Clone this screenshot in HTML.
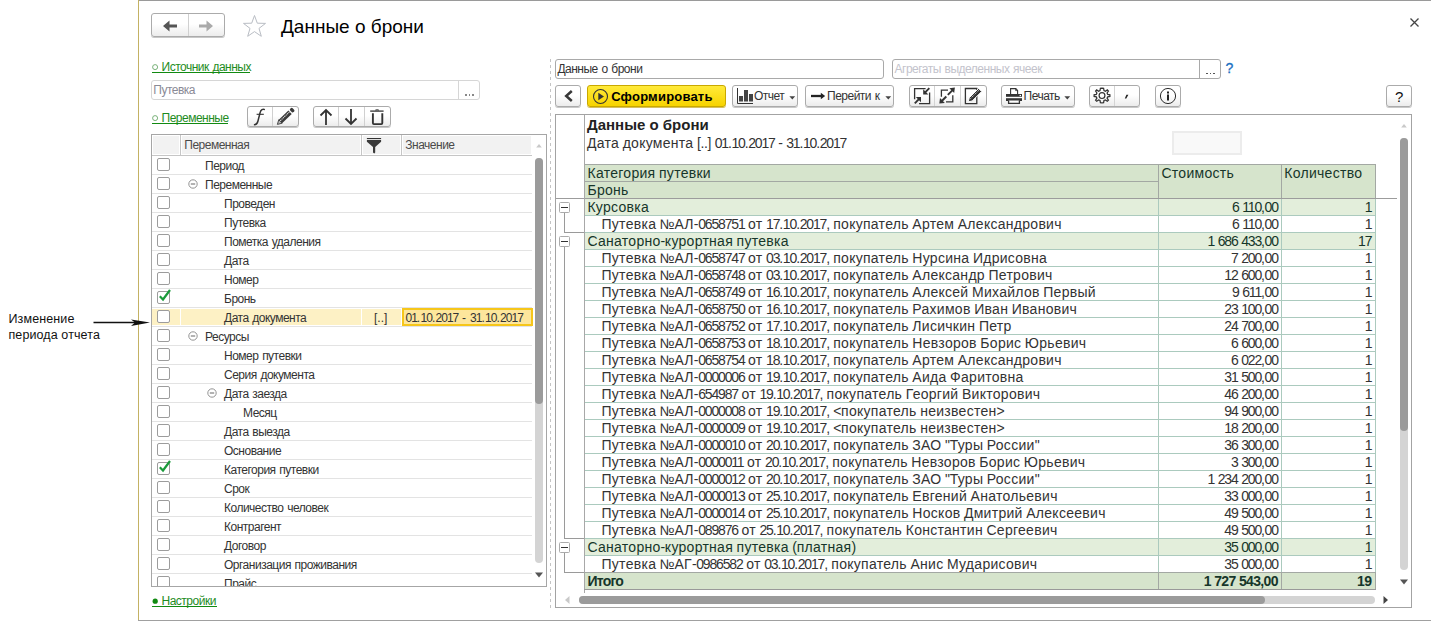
<!DOCTYPE html><html><head><meta charset="utf-8"><style>
html,body{margin:0;padding:0;}
body{width:1431px;height:621px;position:relative;overflow:hidden;background:#fff;font-family:"Liberation Sans",sans-serif;}
.t{position:absolute;white-space:pre;font-family:"Liberation Sans",sans-serif;}
.btn{position:absolute;box-sizing:border-box;border:1px solid #ababab;border-radius:3px;background:linear-gradient(#ffffff 0%,#ffffff 45%,#ececec 100%);box-shadow:0 1px 0 #c8c8c8;}
</style></head><body>
<div style="position:absolute;left:138px;top:0px;width:1293px;height:1px;background:#9a9a9a"></div>
<div style="position:absolute;left:138px;top:0px;width:1px;height:621px;background:#c4b264"></div>
<div style="position:absolute;left:138px;top:620px;width:1293px;height:1px;background:#a0a0a0"></div>
<div class="t" style="left:8.5px;top:313px;font-size:12.5px;line-height:12.5px;font-weight:400;color:#111;letter-spacing:0.12px">Изменение</div>
<div class="t" style="left:8.5px;top:329px;font-size:12.5px;line-height:12.5px;font-weight:400;color:#111;letter-spacing:0.1px">периода отчета</div>
<svg style="position:absolute;left:90px;top:316px" width="64" height="14"><line x1="3.5" y1="6.5" x2="50" y2="6.5" stroke="#111" stroke-width="1.3"/><path d="M41 3.5 L60 6.5 L41 10 L45 6.5 Z" fill="#111"/></svg>
<div class="btn" style="left:151px;top:13px;width:74px;height:24px"></div>
<div style="position:absolute;left:188px;top:14px;width:1px;height:22px;background:#d0d0d0"></div>
<svg style="position:absolute;left:160px;top:18px" width="20" height="16"><path d="M3 8 L9.5 2.5 L9.5 6.5 L17 6.5 L17 9.5 L9.5 9.5 L9.5 13.5 Z" fill="#555"/></svg>
<svg style="position:absolute;left:196px;top:18px" width="20" height="16"><path d="M17 8 L10.5 2.5 L10.5 6.5 L3 6.5 L3 9.5 L10.5 9.5 L10.5 13.5 Z" fill="#aaa"/></svg>
<svg style="position:absolute;left:242px;top:14px" width="25" height="24"><path d="M12.5 1.5 L15.3 9.2 L23.5 9.4 L17 14.4 L19.3 22.3 L12.5 17.6 L5.7 22.3 L8 14.4 L1.5 9.4 L9.7 9.2 Z" fill="none" stroke="#b9bdc4" stroke-width="1"/></svg>
<div class="t" style="left:281px;top:17px;font-size:19px;line-height:19px;font-weight:400;color:#000;letter-spacing:0px">Данные о брони</div>
<svg style="position:absolute;left:1408px;top:16px" width="13" height="13"><path d="M2.5 2.5 L10.5 10.5 M10.5 2.5 L2.5 10.5" stroke="#444" stroke-width="1.3"/></svg>
<svg style="position:absolute;left:152px;top:64px" width="7" height="7"><circle cx="3.1" cy="3.1" r="2.5" fill="none" stroke="#6aa86a" stroke-width="0.9"/></svg>
<div class="t" style="left:161.5px;top:61px;font-size:12px;line-height:12px;font-weight:400;color:#1e8c1e;"><span style="letter-spacing:-0.5px">Источник</span><span style="letter-spacing:0.35px"> </span><span style="letter-spacing:-0.5px">данных</span></div>
<div style="position:absolute;left:152px;top:72px;width:98px;height:1px;background:#118a11"></div>
<div style="position:absolute;left:151px;top:80px;width:329px;height:20px;box-sizing:border-box;border:1px solid #d6d6d6;border-radius:3px;background:#fff"></div>
<div style="position:absolute;left:458px;top:81px;width:1px;height:18px;background:#d6d6d6"></div>
<div style="position:absolute;left:465px;top:94px;width:1.5px;height:1.5px;background:#888"></div>
<div style="position:absolute;left:468.5px;top:94px;width:1.5px;height:1.5px;background:#888"></div>
<div style="position:absolute;left:472px;top:94px;width:1.5px;height:1.5px;background:#888"></div>
<div class="t" style="left:153.3px;top:84px;font-size:12px;line-height:12px;font-weight:400;color:#8a8a96;"><span style="letter-spacing:-0.5px">Путевка</span></div>
<svg style="position:absolute;left:152px;top:115px" width="7" height="7"><circle cx="3.1" cy="3.1" r="2.5" fill="none" stroke="#6aa86a" stroke-width="0.9"/></svg>
<div class="t" style="left:161.5px;top:112px;font-size:12px;line-height:12px;font-weight:400;color:#1e8c1e;"><span style="letter-spacing:-0.5px">Переменные</span></div>
<div style="position:absolute;left:152px;top:123px;width:75.5px;height:1px;background:#118a11"></div>
<div class="btn" style="left:247px;top:106px;width:52px;height:21px"></div>
<div style="position:absolute;left:272px;top:107px;width:1px;height:19px;background:#d0d0d0"></div>
<svg style="position:absolute;left:246px;top:104px" width="54" height="24"><path d="M18.9 5.6 C16.6 4.9 14.9 5.6 14.1 8.6 L11.9 17.3 C11.1 20.3 9.9 20.9 7.9 20.6" stroke="#333" stroke-width="1.5" fill="none"/><path d="M10.6 10.3 H17.8" stroke="#333" stroke-width="1.1"/><g transform="translate(31.4,20.4) rotate(-44)"><path d="M0 0 L4.2 -2.4 V2.4 Z" fill="#bbb" stroke="#444" stroke-width="0.9"/><rect x="4.2" y="-2.4" width="13.4" height="4.8" fill="#3a3a3a"/><path d="M4.6 -0.6 H17.2" stroke="#eee" stroke-width="1" stroke-dasharray="1.2 0.7"/><rect x="18.8" y="-2.4" width="3.4" height="4.8" rx="1.4" fill="#3a3a3a"/></g></svg>
<div class="btn" style="left:313px;top:106px;width:78px;height:21px"></div>
<div style="position:absolute;left:338px;top:107px;width:1px;height:19px;background:#d0d0d0"></div>
<div style="position:absolute;left:364px;top:107px;width:1px;height:19px;background:#d0d0d0"></div>
<svg style="position:absolute;left:316px;top:107px" width="20" height="20"><path d="M10 3 V18 M4.5 8.5 L10 3 L15.5 8.5" stroke="#333" stroke-width="1.8" fill="none"/></svg>
<svg style="position:absolute;left:341px;top:107px" width="20" height="20"><path d="M10 2 V17 M4.5 11.5 L10 17 L15.5 11.5" stroke="#333" stroke-width="1.8" fill="none"/></svg>
<svg style="position:absolute;left:368px;top:107px" width="20" height="20"><path d="M2.2 4.1 H15.6" stroke="#333" stroke-width="1.3"/><path d="M7.4 3.2 Q9 2.3 10.8 3.2" stroke="#333" stroke-width="1.2" fill="none"/><path d="M4.9 6.3 V16.1 Q4.9 17.1 5.9 17.1 H13.3 Q14.3 17.1 14.3 16.1 V6.3" stroke="#333" stroke-width="1.9" fill="none"/></svg>
<div style="position:absolute;left:151px;top:134px;width:396px;height:453px;box-sizing:border-box;border:1px solid #a6a6a6;background:#fff"></div>
<div style="position:absolute;left:153px;top:136px;width:26px;height:18px;background:#f2f2f2"></div>
<div style="position:absolute;left:182px;top:136px;width:178px;height:18px;background:#f2f2f2"></div>
<div style="position:absolute;left:363px;top:136px;width:37px;height:18px;background:#f2f2f2"></div>
<div style="position:absolute;left:403px;top:136px;width:128px;height:18px;background:#f2f2f2"></div>
<div style="position:absolute;left:152px;top:155px;width:380px;height:1px;background:#c6c6c6"></div>
<div style="position:absolute;left:180px;top:135px;width:1px;height:20px;background:#c6c6c6"></div>
<div style="position:absolute;left:361px;top:135px;width:1px;height:20px;background:#c6c6c6"></div>
<div style="position:absolute;left:401px;top:135px;width:1px;height:20px;background:#c6c6c6"></div>
<div class="t" style="left:184.3px;top:139px;font-size:12px;line-height:12px;font-weight:400;color:#4a4a4a;"><span style="letter-spacing:-0.5px">Переменная</span></div>
<div class="t" style="left:405.3px;top:139px;font-size:12px;line-height:12px;font-weight:400;color:#4a4a4a;"><span style="letter-spacing:-0.5px">Значение</span></div>
<svg style="position:absolute;left:366px;top:137px" width="17" height="18"><rect x="0.9" y="1" width="14.2" height="1.1" fill="#333"/><path d="M0.9 2.9 H15.1 V4.7 L9.2 10 H7 L0.9 4.7 Z" fill="#3a3a3a"/><path d="M7 9.8 H9.2 V15.4 L8.3 16.4 L7 15.4 Z" fill="#3a3a3a"/></svg>
<div style="position:absolute;left:152px;top:155px;width:381px;height:431px;overflow:hidden">
<div style="position:absolute;left:0;top:19px;width:380px;height:1px;background:#e3e3e3"></div>
<div style="position:absolute;left:5px;top:3px;width:13px;height:13px;box-sizing:border-box;border:1px solid #9c9c9c;border-radius:2px;background:#fff"></div>
<div class="t" style="left:53px;top:5px;font-size:12px;line-height:12px;color:#333"><span style="letter-spacing:-0.5px">Период</span></div>
<div style="position:absolute;left:0;top:38px;width:380px;height:1px;background:#e3e3e3"></div>
<div style="position:absolute;left:5px;top:22px;width:13px;height:13px;box-sizing:border-box;border:1px solid #9c9c9c;border-radius:2px;background:#fff"></div>
<div class="t" style="left:53px;top:24px;font-size:12px;line-height:12px;color:#333"><span style="letter-spacing:-0.5px">Переменные</span></div>
<svg style="position:absolute;left:36px;top:24px" width="10" height="10"><circle cx="5" cy="5" r="4.2" fill="none" stroke="#888" stroke-width="0.9"/><path d="M2.8 5 H7.2" stroke="#666" stroke-width="1"/></svg>
<div style="position:absolute;left:0;top:57px;width:380px;height:1px;background:#e3e3e3"></div>
<div style="position:absolute;left:5px;top:41px;width:13px;height:13px;box-sizing:border-box;border:1px solid #9c9c9c;border-radius:2px;background:#fff"></div>
<div class="t" style="left:72px;top:43px;font-size:12px;line-height:12px;color:#333"><span style="letter-spacing:-0.5px">Проведен</span></div>
<div style="position:absolute;left:0;top:76px;width:380px;height:1px;background:#e3e3e3"></div>
<div style="position:absolute;left:5px;top:60px;width:13px;height:13px;box-sizing:border-box;border:1px solid #9c9c9c;border-radius:2px;background:#fff"></div>
<div class="t" style="left:72px;top:62px;font-size:12px;line-height:12px;color:#333"><span style="letter-spacing:-0.5px">Путевка</span></div>
<div style="position:absolute;left:0;top:95px;width:380px;height:1px;background:#e3e3e3"></div>
<div style="position:absolute;left:5px;top:79px;width:13px;height:13px;box-sizing:border-box;border:1px solid #9c9c9c;border-radius:2px;background:#fff"></div>
<div class="t" style="left:72px;top:81px;font-size:12px;line-height:12px;color:#333"><span style="letter-spacing:-0.5px">Пометка</span><span style="letter-spacing:0.35px"> </span><span style="letter-spacing:-0.5px">удаления</span></div>
<div style="position:absolute;left:0;top:114px;width:380px;height:1px;background:#e3e3e3"></div>
<div style="position:absolute;left:5px;top:98px;width:13px;height:13px;box-sizing:border-box;border:1px solid #9c9c9c;border-radius:2px;background:#fff"></div>
<div class="t" style="left:72px;top:100px;font-size:12px;line-height:12px;color:#333"><span style="letter-spacing:-0.5px">Дата</span></div>
<div style="position:absolute;left:0;top:133px;width:380px;height:1px;background:#e3e3e3"></div>
<div style="position:absolute;left:5px;top:117px;width:13px;height:13px;box-sizing:border-box;border:1px solid #9c9c9c;border-radius:2px;background:#fff"></div>
<div class="t" style="left:72px;top:119px;font-size:12px;line-height:12px;color:#333"><span style="letter-spacing:-0.5px">Номер</span></div>
<div style="position:absolute;left:0;top:152px;width:380px;height:1px;background:#e3e3e3"></div>
<div style="position:absolute;left:5px;top:136px;width:13px;height:13px;box-sizing:border-box;border:1px solid #9c9c9c;border-radius:2px;background:#fff"></div>
<svg style="position:absolute;left:6px;top:133px" width="14" height="14"><path d="M1.8 8.3 L5 11.5 L12 2" stroke="#1a9a3a" stroke-width="2.2" fill="none"/></svg>
<div class="t" style="left:72px;top:138px;font-size:12px;line-height:12px;color:#333"><span style="letter-spacing:-0.5px">Бронь</span></div>
<div style="position:absolute;left:0;top:154px;width:381px;height:16px;background:#fdf1c5"></div>
<div style="position:absolute;left:209px;top:153px;width:1px;height:18px;background:#fff"></div>
<div style="position:absolute;left:28px;top:153px;width:1px;height:18px;background:#fff"></div>
<div style="position:absolute;left:249px;top:153px;width:1px;height:18px;background:#fff"></div>
<div style="position:absolute;left:250px;top:153px;width:131px;height:18px;box-sizing:border-box;border:2px solid #f6c61a;background:#fde69c"></div>
<div style="position:absolute;left:0;top:171px;width:380px;height:1px;background:#e3e3e3"></div>
<div style="position:absolute;left:5px;top:155px;width:13px;height:13px;box-sizing:border-box;border:1px solid #9c9c9c;border-radius:2px;background:#fff"></div>
<div class="t" style="left:72px;top:157px;font-size:12px;line-height:12px;color:#333"><span style="letter-spacing:-0.5px">Дата</span><span style="letter-spacing:0.35px"> </span><span style="letter-spacing:-0.5px">документа</span></div>
<div class="t" style="left:222px;top:157px;font-size:12px;line-height:12px;color:#333">[..]</div>
<div class="t" style="left:253.5px;top:157px;font-size:12px;line-height:12px;color:#333"><span style="letter-spacing:-1.0px">01</span><span style="letter-spacing:0.35px">.</span><span style="letter-spacing:-1.0px">10</span><span style="letter-spacing:0.35px">.</span><span style="letter-spacing:-1.0px">2017</span><span style="letter-spacing:0.35px"> - </span><span style="letter-spacing:-1.0px">31</span><span style="letter-spacing:0.35px">.</span><span style="letter-spacing:-1.0px">10</span><span style="letter-spacing:0.35px">.</span><span style="letter-spacing:-1.0px">2017</span></div>
<div style="position:absolute;left:0;top:190px;width:380px;height:1px;background:#e3e3e3"></div>
<div style="position:absolute;left:5px;top:174px;width:13px;height:13px;box-sizing:border-box;border:1px solid #9c9c9c;border-radius:2px;background:#fff"></div>
<div class="t" style="left:53px;top:176px;font-size:12px;line-height:12px;color:#333"><span style="letter-spacing:-0.5px">Ресурсы</span></div>
<svg style="position:absolute;left:36px;top:176px" width="10" height="10"><circle cx="5" cy="5" r="4.2" fill="none" stroke="#888" stroke-width="0.9"/><path d="M2.8 5 H7.2" stroke="#666" stroke-width="1"/></svg>
<div style="position:absolute;left:0;top:209px;width:380px;height:1px;background:#e3e3e3"></div>
<div style="position:absolute;left:5px;top:193px;width:13px;height:13px;box-sizing:border-box;border:1px solid #9c9c9c;border-radius:2px;background:#fff"></div>
<div class="t" style="left:72px;top:195px;font-size:12px;line-height:12px;color:#333"><span style="letter-spacing:-0.5px">Номер</span><span style="letter-spacing:0.35px"> </span><span style="letter-spacing:-0.5px">путевки</span></div>
<div style="position:absolute;left:0;top:228px;width:380px;height:1px;background:#e3e3e3"></div>
<div style="position:absolute;left:5px;top:212px;width:13px;height:13px;box-sizing:border-box;border:1px solid #9c9c9c;border-radius:2px;background:#fff"></div>
<div class="t" style="left:72px;top:214px;font-size:12px;line-height:12px;color:#333"><span style="letter-spacing:-0.5px">Серия</span><span style="letter-spacing:0.35px"> </span><span style="letter-spacing:-0.5px">документа</span></div>
<div style="position:absolute;left:0;top:247px;width:380px;height:1px;background:#e3e3e3"></div>
<div style="position:absolute;left:5px;top:231px;width:13px;height:13px;box-sizing:border-box;border:1px solid #9c9c9c;border-radius:2px;background:#fff"></div>
<div class="t" style="left:72px;top:233px;font-size:12px;line-height:12px;color:#333"><span style="letter-spacing:-0.5px">Дата</span><span style="letter-spacing:0.35px"> </span><span style="letter-spacing:-0.5px">заезда</span></div>
<svg style="position:absolute;left:55px;top:233px" width="10" height="10"><circle cx="5" cy="5" r="4.2" fill="none" stroke="#888" stroke-width="0.9"/><path d="M2.8 5 H7.2" stroke="#666" stroke-width="1"/></svg>
<div style="position:absolute;left:0;top:266px;width:380px;height:1px;background:#e3e3e3"></div>
<div style="position:absolute;left:5px;top:250px;width:13px;height:13px;box-sizing:border-box;border:1px solid #9c9c9c;border-radius:2px;background:#fff"></div>
<div class="t" style="left:91px;top:252px;font-size:12px;line-height:12px;color:#333"><span style="letter-spacing:-0.5px">Месяц</span></div>
<div style="position:absolute;left:0;top:285px;width:380px;height:1px;background:#e3e3e3"></div>
<div style="position:absolute;left:5px;top:269px;width:13px;height:13px;box-sizing:border-box;border:1px solid #9c9c9c;border-radius:2px;background:#fff"></div>
<div class="t" style="left:72px;top:271px;font-size:12px;line-height:12px;color:#333"><span style="letter-spacing:-0.5px">Дата</span><span style="letter-spacing:0.35px"> </span><span style="letter-spacing:-0.5px">выезда</span></div>
<div style="position:absolute;left:0;top:304px;width:380px;height:1px;background:#e3e3e3"></div>
<div style="position:absolute;left:5px;top:288px;width:13px;height:13px;box-sizing:border-box;border:1px solid #9c9c9c;border-radius:2px;background:#fff"></div>
<div class="t" style="left:72px;top:290px;font-size:12px;line-height:12px;color:#333"><span style="letter-spacing:-0.5px">Основание</span></div>
<div style="position:absolute;left:0;top:323px;width:380px;height:1px;background:#e3e3e3"></div>
<div style="position:absolute;left:5px;top:307px;width:13px;height:13px;box-sizing:border-box;border:1px solid #9c9c9c;border-radius:2px;background:#fff"></div>
<svg style="position:absolute;left:6px;top:304px" width="14" height="14"><path d="M1.8 8.3 L5 11.5 L12 2" stroke="#1a9a3a" stroke-width="2.2" fill="none"/></svg>
<div class="t" style="left:72px;top:309px;font-size:12px;line-height:12px;color:#333"><span style="letter-spacing:-0.5px">Категория</span><span style="letter-spacing:0.35px"> </span><span style="letter-spacing:-0.5px">путевки</span></div>
<div style="position:absolute;left:0;top:342px;width:380px;height:1px;background:#e3e3e3"></div>
<div style="position:absolute;left:5px;top:326px;width:13px;height:13px;box-sizing:border-box;border:1px solid #9c9c9c;border-radius:2px;background:#fff"></div>
<div class="t" style="left:72px;top:328px;font-size:12px;line-height:12px;color:#333"><span style="letter-spacing:-0.5px">Срок</span></div>
<div style="position:absolute;left:0;top:361px;width:380px;height:1px;background:#e3e3e3"></div>
<div style="position:absolute;left:5px;top:345px;width:13px;height:13px;box-sizing:border-box;border:1px solid #9c9c9c;border-radius:2px;background:#fff"></div>
<div class="t" style="left:72px;top:347px;font-size:12px;line-height:12px;color:#333"><span style="letter-spacing:-0.5px">Количество</span><span style="letter-spacing:0.35px"> </span><span style="letter-spacing:-0.5px">человек</span></div>
<div style="position:absolute;left:0;top:380px;width:380px;height:1px;background:#e3e3e3"></div>
<div style="position:absolute;left:5px;top:364px;width:13px;height:13px;box-sizing:border-box;border:1px solid #9c9c9c;border-radius:2px;background:#fff"></div>
<div class="t" style="left:72px;top:366px;font-size:12px;line-height:12px;color:#333"><span style="letter-spacing:-0.5px">Контрагент</span></div>
<div style="position:absolute;left:0;top:399px;width:380px;height:1px;background:#e3e3e3"></div>
<div style="position:absolute;left:5px;top:383px;width:13px;height:13px;box-sizing:border-box;border:1px solid #9c9c9c;border-radius:2px;background:#fff"></div>
<div class="t" style="left:72px;top:385px;font-size:12px;line-height:12px;color:#333"><span style="letter-spacing:-0.5px">Договор</span></div>
<div style="position:absolute;left:0;top:418px;width:380px;height:1px;background:#e3e3e3"></div>
<div style="position:absolute;left:5px;top:402px;width:13px;height:13px;box-sizing:border-box;border:1px solid #9c9c9c;border-radius:2px;background:#fff"></div>
<div class="t" style="left:72px;top:404px;font-size:12px;line-height:12px;color:#333"><span style="letter-spacing:-0.5px">Организация</span><span style="letter-spacing:0.35px"> </span><span style="letter-spacing:-0.5px">проживания</span></div>
<div style="position:absolute;left:0;top:437px;width:380px;height:1px;background:#e3e3e3"></div>
<div style="position:absolute;left:5px;top:421px;width:13px;height:13px;box-sizing:border-box;border:1px solid #9c9c9c;border-radius:2px;background:#fff"></div>
<div class="t" style="left:72px;top:423px;font-size:12px;line-height:12px;color:#333"><span style="letter-spacing:-0.5px">Прайс</span></div>
</div>
<div style="position:absolute;left:535px;top:158px;width:8px;height:405px;background:#d4d4d4;border-radius:4px"></div>
<div style="position:absolute;left:535px;top:158px;width:8px;height:246px;background:#9b9b9b;border-radius:4px"></div>
<svg style="position:absolute;left:534px;top:141px" width="10" height="8"><path d="M2.2 6.5 L5 3 L7.8 6.5 Z" fill="#c9c9c9"/></svg>
<svg style="position:absolute;left:534px;top:571px" width="10" height="8"><path d="M1 1.5 L9 1.5 L5 6.5 Z" fill="#555"/></svg>
<svg style="position:absolute;left:152px;top:598px" width="7" height="7"><circle cx="3.2" cy="3.2" r="2.6" fill="#118a11"/></svg>
<div class="t" style="left:161.5px;top:595px;font-size:12px;line-height:12px;font-weight:400;color:#1e8c1e;"><span style="letter-spacing:-0.5px">Настройки</span></div>
<div style="position:absolute;left:152px;top:606px;width:65px;height:1px;background:#118a11"></div>
<div style="position:absolute;left:550px;top:59px;width:1px;height:549px;background:repeating-linear-gradient(#c4c4c4 0 3px,transparent 3px 6px)"></div>
<div style="position:absolute;left:555px;top:59px;width:329px;height:20px;box-sizing:border-box;border:1px solid #a9a9a9;border-radius:3px;background:#fff"></div>
<div class="t" style="left:557.4px;top:63px;font-size:12px;line-height:12px;font-weight:400;color:#333;"><span style="letter-spacing:-0.5px">Данные</span><span style="letter-spacing:0.35px"> </span><span style="letter-spacing:-0.5px">о</span><span style="letter-spacing:0.35px"> </span><span style="letter-spacing:-0.5px">брони</span></div>
<div style="position:absolute;left:892px;top:59px;width:329px;height:20px;box-sizing:border-box;border:1px solid #a9a9a9;border-radius:3px;background:#fff"></div>
<div style="position:absolute;left:1199px;top:60px;width:1px;height:18px;background:#a9a9a9"></div>
<div style="position:absolute;left:1206px;top:72.5px;width:1.5px;height:1.5px;background:#555"></div>
<div style="position:absolute;left:1209.5px;top:72.5px;width:1.5px;height:1.5px;background:#555"></div>
<div style="position:absolute;left:1213px;top:72.5px;width:1.5px;height:1.5px;background:#555"></div>
<div class="t" style="left:894.5px;top:63px;font-size:12px;line-height:12px;font-weight:400;color:#c3c3cc;"><span style="letter-spacing:-0.5px">Агрегаты</span><span style="letter-spacing:0.35px"> </span><span style="letter-spacing:-0.5px">выделенных</span><span style="letter-spacing:0.35px"> </span><span style="letter-spacing:-0.5px">ячеек</span></div>
<div class="t" style="left:1225.5px;top:61px;font-size:14px;line-height:14px;font-weight:400;color:#1a6fc2;-webkit-text-stroke:0.3px #1a6fc2">?</div>
<div class="btn" style="left:555px;top:85px;width:26px;height:22px;"></div>
<svg style="position:absolute;left:561.8px;top:89px" width="14" height="14"><path d="M9.8 2 L4.2 7 L9.8 12" stroke="#383838" stroke-width="2.5" fill="none"/></svg>
<div style="position:absolute;left:587px;top:85px;width:139px;height:22px;box-sizing:border-box;border:1px solid #c9a800;border-radius:3px;background:linear-gradient(#ffea3a,#f7d300);box-shadow:0 1px 0 #d6c060"></div>
<svg style="position:absolute;left:592px;top:88px" width="17" height="17"><circle cx="8.5" cy="8.5" r="7" fill="none" stroke="#333" stroke-width="1.1"/><path d="M6.3 4.8 L12 8.5 L6.3 12.2 Z" fill="#333"/></svg>
<div class="t" style="left:611.2px;top:90px;font-size:13px;line-height:13px;font-weight:700;color:#000;letter-spacing:0.2px">Сформировать</div>
<div class="btn" style="left:732px;top:85px;width:66px;height:22px;"></div>
<svg style="position:absolute;left:730px;top:84px" width="26" height="22"><path d="M7.5 4 V19.5 H23" stroke="#333" stroke-width="1" fill="none"/><rect x="9" y="12" width="4" height="5.5" fill="#444"/><rect x="14" y="6" width="4" height="11.5" fill="#444"/><rect x="19" y="10" width="4" height="7.5" fill="#444"/></svg>
<div class="t" style="left:754px;top:90px;font-size:12px;line-height:12px;font-weight:400;color:#333;"><span style="letter-spacing:-0.5px">Отчет</span></div>
<svg style="position:absolute;left:788.6px;top:96px" width="7" height="4"><path d="M0.4 0.2 H6.2 L3.3 3.4 Z" fill="#444"/></svg>
<div class="btn" style="left:805px;top:85px;width:89px;height:22px;"></div>
<svg style="position:absolute;left:810px;top:90px" width="17" height="12"><path d="M1 6 H12" stroke="#222" stroke-width="2.3"/><path d="M10.8 2.8 L15.2 6 L10.8 9.2 Z" fill="#222"/></svg>
<div class="t" style="left:827px;top:90px;font-size:12px;line-height:12px;font-weight:400;color:#333;"><span style="letter-spacing:-0.5px">Перейти</span><span style="letter-spacing:0.35px"> </span><span style="letter-spacing:-0.5px">к</span></div>
<svg style="position:absolute;left:884.5px;top:96px" width="7" height="4"><path d="M0.4 0.2 H6.2 L3.3 3.4 Z" fill="#444"/></svg>
<div class="btn" style="left:909px;top:85px;width:78px;height:22px;"></div>
<div style="position:absolute;left:934px;top:86px;width:1px;height:20px;background:#d4d4d4"></div>
<div style="position:absolute;left:960px;top:86px;width:1px;height:20px;background:#d4d4d4"></div>
<svg style="position:absolute;left:908px;top:84px" width="80" height="24"><g stroke="#333" stroke-width="1.3" fill="none"><path d="M6.6 15.2 V4.6 H17.6"/><path d="M21.6 8.6 V19.6 H11"/><path d="M33.4 12.8 V6.2 H40"/><path d="M44.8 11.2 V17.8 H38"/><path d="M57.4 4.5 H68.8 V19.6 H57.4 Z"/></g><g stroke="#333" stroke-width="1.9" fill="none"><path d="M21.3 4.2 L17.2 8.3"/><path d="M6.8 19.3 L10.9 15.2"/><path d="M32.8 18 L38.3 12.5"/><path d="M45.4 5.3 L39.8 10.9"/></g><g fill="#333"><path d="M15.2 10.5 V5.3 L20.4 10.5 Z"/><path d="M13 13 V18.2 L7.8 13 Z"/><path d="M31.3 19.6 L32 14.1 L36.8 18.9 Z"/><path d="M46.9 3.6 L46.2 9.1 L41.4 4.3 Z"/></g><path d="M60.3 17.9 L61.2 13.8 L70.6 4.4 L73.7 7.5 L64.3 16.9 Z" fill="#333" stroke="#fff" stroke-width="1"/><path d="M62.5 14.6 L71 6.1" stroke="#fff" stroke-width="0.8" stroke-dasharray="1.2 1"/></svg>
<div class="btn" style="left:1001px;top:85px;width:74px;height:22px;"></div>
<svg style="position:absolute;left:1000px;top:84px" width="24" height="22"><path d="M10.6 10.5 V4.6 H15.8 L17.6 6.4 V10.5" stroke="#333" stroke-width="1.1" fill="#fff"/><path d="M15.6 4.8 V6.6 H17.4" stroke="#333" stroke-width="0.8" fill="none"/><rect x="6" y="10" width="16" height="2.8" fill="#333"/><rect x="19.6" y="10.9" width="1.4" height="1.2" fill="#fff"/><rect x="6" y="14.2" width="16" height="2.8" fill="#333"/><path d="M8.6 16.5 V19.4 H19.4 V16.5" stroke="#333" stroke-width="1.3" fill="#fff"/></svg>
<div class="t" style="left:1023.5px;top:90px;font-size:12px;line-height:12px;font-weight:400;color:#333;"><span style="letter-spacing:-0.5px">Печать</span></div>
<svg style="position:absolute;left:1064.4px;top:96px" width="7" height="4"><path d="M0.4 0.2 H6.2 L3.3 3.4 Z" fill="#444"/></svg>
<div class="btn" style="left:1089px;top:85px;width:51px;height:22px;"></div>
<div style="position:absolute;left:1114px;top:86px;width:1px;height:20px;background:#d4d4d4"></div>
<svg style="position:absolute;left:1093px;top:87px" width="18" height="18"><path d="M9 1.2 L10.6 1.4 L11 3.6 L12.4 4.2 L14.3 2.9 L15.4 4.1 L14.1 6 L14.7 7.4 L16.9 7.8 L16.9 9.4 L14.7 9.8 L14.1 11.2 L15.4 13.1 L14.3 14.2 L12.4 12.9 L11 13.5 L10.6 15.7 L9 15.9 L7.4 15.7 L7 13.5 L5.6 12.9 L3.7 14.2 L2.6 13.1 L3.9 11.2 L3.3 9.8 L1.1 9.4 L1.1 7.8 L3.3 7.4 L3.9 6 L2.6 4.1 L3.7 2.9 L5.6 4.2 L7 3.6 L7.4 1.4 Z" fill="none" stroke="#333" stroke-width="1.25"/><circle cx="9" cy="8.6" r="2.9" fill="none" stroke="#333" stroke-width="1.2"/></svg>
<svg style="position:absolute;left:1123px;top:92px" width="6" height="7"><path d="M3.4 2.7 H5.4 L3.3 6.4 H1.8 Z" fill="#222"/></svg>
<div class="btn" style="left:1155px;top:85px;width:26px;height:22px;"></div>
<svg style="position:absolute;left:1158px;top:87px" width="20" height="18"><circle cx="10" cy="9" r="7.6" fill="none" stroke="#222" stroke-width="0.95"/><rect x="9" y="7.5" width="2" height="6" fill="#222"/><rect x="9" y="4.5" width="2" height="2" fill="#222"/></svg>
<div class="btn" style="left:1386px;top:85px;width:26px;height:22px;"></div>
<div class="t" style="left:1395px;top:89px;font-size:15px;line-height:15px;font-weight:400;color:#111;">?</div>
<div style="position:absolute;left:555px;top:114px;width:857px;height:494px;box-sizing:border-box;border:1px solid #a3a3a3;background:#fff"></div>
<div class="t" style="left:587px;top:117px;font-size:15px;line-height:15px;font-weight:700;color:#222;">Данные о брони</div>
<div class="t" style="left:587px;top:136px;font-size:14px;line-height:14px;font-weight:400;color:#333;"><span style="letter-spacing:0.28px">Дата</span><span style="letter-spacing:-0.36px"> </span><span style="letter-spacing:0.28px">документа</span><span style="letter-spacing:-0.36px"> [..] </span><span style="letter-spacing:-1.16px">01</span><span style="letter-spacing:-0.36px">.</span><span style="letter-spacing:-1.16px">10</span><span style="letter-spacing:-0.36px">.</span><span style="letter-spacing:-1.16px">2017</span><span style="letter-spacing:-0.36px"> - </span><span style="letter-spacing:-1.16px">31</span><span style="letter-spacing:-0.36px">.</span><span style="letter-spacing:-1.16px">10</span><span style="letter-spacing:-0.36px">.</span><span style="letter-spacing:-1.16px">2017</span></div>
<div style="position:absolute;left:1172px;top:131px;width:70px;height:24px;box-sizing:border-box;border:2px solid #ececec;background:#f9f9f9"></div>
<div style="position:absolute;left:584px;top:164px;width:792px;height:35px;background:#d6e4cc"></div>
<div style="position:absolute;left:584px;top:164px;width:792px;height:1px;background:#a3a8a3"></div>
<div style="position:absolute;left:584px;top:181px;width:575px;height:1px;background:#a3a8a3"></div>
<div style="position:absolute;left:1158px;top:164px;width:1px;height:35px;background:#a3a8a3"></div>
<div style="position:absolute;left:1281px;top:164px;width:1px;height:35px;background:#a3a8a3"></div>
<div style="position:absolute;left:1375px;top:164px;width:1px;height:35px;background:#a3a8a3"></div>
<div style="position:absolute;left:556px;top:198px;width:841px;height:1px;background:#9c9c9c"></div>
<div style="position:absolute;left:584px;top:115px;width:1px;height:478px;background:#a8a8a8"></div>
<div class="t" style="left:587.5px;top:166px;font-size:14px;line-height:14px;font-weight:400;color:#16362a;"><span style="letter-spacing:0.28px">Категория</span><span style="letter-spacing:-0.36px"> </span><span style="letter-spacing:0.28px">путевки</span></div>
<div class="t" style="left:587.5px;top:183px;font-size:14px;line-height:14px;font-weight:400;color:#16362a;"><span style="letter-spacing:0.28px">Бронь</span></div>
<div class="t" style="left:1161.4px;top:166px;font-size:14px;line-height:14px;font-weight:400;color:#16362a;"><span style="letter-spacing:0.28px">Стоимость</span></div>
<div class="t" style="left:1284.3px;top:166px;font-size:14px;line-height:14px;font-weight:400;color:#16362a;"><span style="letter-spacing:0.28px">Количество</span></div>
<div style="position:absolute;left:585px;top:199px;width:791px;height:16px;background:#e3eedb"></div>
<div style="position:absolute;left:585px;top:215px;width:791px;height:1px;background:#abcabe"></div>
<div style="position:absolute;left:1158px;top:199px;width:1px;height:17px;background:#abcabe"></div>
<div style="position:absolute;left:1281px;top:199px;width:1px;height:17px;background:#abcabe"></div>
<div style="position:absolute;left:1375px;top:199px;width:1px;height:17px;background:#abcabe"></div>
<div class="t" style="left:587.4px;top:200px;font-size:14px;line-height:14px;font-weight:400;color:#16362a;"><span style="letter-spacing:0.28px">Курсовка</span></div>
<div class="t" style="right:153.20000000000005px;top:200px;font-size:14px;line-height:14px;font-weight:400;color:#16362a;text-align:right;"><span style="letter-spacing:-1.16px">6</span><span style="letter-spacing:-0.36px"> </span><span style="letter-spacing:-1.16px">110</span><span style="letter-spacing:-0.36px">,</span><span style="letter-spacing:-1.16px">00</span></div>
<div class="t" style="right:59.700000000000045px;top:200px;font-size:14px;line-height:14px;font-weight:400;color:#16362a;text-align:right;"><span style="letter-spacing:-1.16px">1</span></div>
<div style="position:absolute;left:585px;top:232px;width:791px;height:1px;background:#abcabe"></div>
<div style="position:absolute;left:1158px;top:216px;width:1px;height:17px;background:#abcabe"></div>
<div style="position:absolute;left:1281px;top:216px;width:1px;height:17px;background:#abcabe"></div>
<div style="position:absolute;left:1375px;top:216px;width:1px;height:17px;background:#abcabe"></div>
<div class="t" style="left:601.5px;top:217px;font-size:14px;line-height:14px;font-weight:400;color:#333;"><span style="letter-spacing:0.28px">Путевка</span><span style="letter-spacing:-0.36px"> №</span><span style="letter-spacing:0.28px">АЛ</span><span style="letter-spacing:-0.36px">-</span><span style="letter-spacing:-1.16px">0658751</span><span style="letter-spacing:-0.36px"> </span><span style="letter-spacing:0.28px">от</span><span style="letter-spacing:-0.36px"> </span><span style="letter-spacing:-1.16px">17</span><span style="letter-spacing:-0.36px">.</span><span style="letter-spacing:-1.16px">10</span><span style="letter-spacing:-0.36px">.</span><span style="letter-spacing:-1.16px">2017</span><span style="letter-spacing:-0.36px">, </span><span style="letter-spacing:0.28px">покупатель</span><span style="letter-spacing:-0.36px"> </span><span style="letter-spacing:0.28px">Артем</span><span style="letter-spacing:-0.36px"> </span><span style="letter-spacing:0.28px">Александрович</span></div>
<div class="t" style="right:153.20000000000005px;top:217px;font-size:14px;line-height:14px;font-weight:400;color:#333;text-align:right;"><span style="letter-spacing:-1.16px">6</span><span style="letter-spacing:-0.36px"> </span><span style="letter-spacing:-1.16px">110</span><span style="letter-spacing:-0.36px">,</span><span style="letter-spacing:-1.16px">00</span></div>
<div class="t" style="right:59.700000000000045px;top:217px;font-size:14px;line-height:14px;font-weight:400;color:#333;text-align:right;"><span style="letter-spacing:-1.16px">1</span></div>
<div style="position:absolute;left:585px;top:233px;width:791px;height:16px;background:#e3eedb"></div>
<div style="position:absolute;left:585px;top:249px;width:791px;height:1px;background:#abcabe"></div>
<div style="position:absolute;left:1158px;top:233px;width:1px;height:17px;background:#abcabe"></div>
<div style="position:absolute;left:1281px;top:233px;width:1px;height:17px;background:#abcabe"></div>
<div style="position:absolute;left:1375px;top:233px;width:1px;height:17px;background:#abcabe"></div>
<div class="t" style="left:587.4px;top:234px;font-size:14px;line-height:14px;font-weight:400;color:#16362a;"><span style="letter-spacing:0.28px">Санаторно</span><span style="letter-spacing:-0.36px">-</span><span style="letter-spacing:0.28px">курортная</span><span style="letter-spacing:-0.36px"> </span><span style="letter-spacing:0.28px">путевка</span></div>
<div class="t" style="right:153.20000000000005px;top:234px;font-size:14px;line-height:14px;font-weight:400;color:#16362a;text-align:right;"><span style="letter-spacing:-1.16px">1</span><span style="letter-spacing:-0.36px"> </span><span style="letter-spacing:-1.16px">686</span><span style="letter-spacing:-0.36px"> </span><span style="letter-spacing:-1.16px">433</span><span style="letter-spacing:-0.36px">,</span><span style="letter-spacing:-1.16px">00</span></div>
<div class="t" style="right:59.700000000000045px;top:234px;font-size:14px;line-height:14px;font-weight:400;color:#16362a;text-align:right;"><span style="letter-spacing:-1.16px">17</span></div>
<div style="position:absolute;left:585px;top:266px;width:791px;height:1px;background:#abcabe"></div>
<div style="position:absolute;left:1158px;top:250px;width:1px;height:17px;background:#abcabe"></div>
<div style="position:absolute;left:1281px;top:250px;width:1px;height:17px;background:#abcabe"></div>
<div style="position:absolute;left:1375px;top:250px;width:1px;height:17px;background:#abcabe"></div>
<div class="t" style="left:601.5px;top:251px;font-size:14px;line-height:14px;font-weight:400;color:#333;"><span style="letter-spacing:0.28px">Путевка</span><span style="letter-spacing:-0.36px"> №</span><span style="letter-spacing:0.28px">АЛ</span><span style="letter-spacing:-0.36px">-</span><span style="letter-spacing:-1.16px">0658747</span><span style="letter-spacing:-0.36px"> </span><span style="letter-spacing:0.28px">от</span><span style="letter-spacing:-0.36px"> </span><span style="letter-spacing:-1.16px">03</span><span style="letter-spacing:-0.36px">.</span><span style="letter-spacing:-1.16px">10</span><span style="letter-spacing:-0.36px">.</span><span style="letter-spacing:-1.16px">2017</span><span style="letter-spacing:-0.36px">, </span><span style="letter-spacing:0.28px">покупатель</span><span style="letter-spacing:-0.36px"> </span><span style="letter-spacing:0.28px">Нурсина</span><span style="letter-spacing:-0.36px"> </span><span style="letter-spacing:0.28px">Идрисовна</span></div>
<div class="t" style="right:153.20000000000005px;top:251px;font-size:14px;line-height:14px;font-weight:400;color:#333;text-align:right;"><span style="letter-spacing:-1.16px">7</span><span style="letter-spacing:-0.36px"> </span><span style="letter-spacing:-1.16px">200</span><span style="letter-spacing:-0.36px">,</span><span style="letter-spacing:-1.16px">00</span></div>
<div class="t" style="right:59.700000000000045px;top:251px;font-size:14px;line-height:14px;font-weight:400;color:#333;text-align:right;"><span style="letter-spacing:-1.16px">1</span></div>
<div style="position:absolute;left:585px;top:283px;width:791px;height:1px;background:#abcabe"></div>
<div style="position:absolute;left:1158px;top:267px;width:1px;height:17px;background:#abcabe"></div>
<div style="position:absolute;left:1281px;top:267px;width:1px;height:17px;background:#abcabe"></div>
<div style="position:absolute;left:1375px;top:267px;width:1px;height:17px;background:#abcabe"></div>
<div class="t" style="left:601.5px;top:268px;font-size:14px;line-height:14px;font-weight:400;color:#333;"><span style="letter-spacing:0.28px">Путевка</span><span style="letter-spacing:-0.36px"> №</span><span style="letter-spacing:0.28px">АЛ</span><span style="letter-spacing:-0.36px">-</span><span style="letter-spacing:-1.16px">0658748</span><span style="letter-spacing:-0.36px"> </span><span style="letter-spacing:0.28px">от</span><span style="letter-spacing:-0.36px"> </span><span style="letter-spacing:-1.16px">03</span><span style="letter-spacing:-0.36px">.</span><span style="letter-spacing:-1.16px">10</span><span style="letter-spacing:-0.36px">.</span><span style="letter-spacing:-1.16px">2017</span><span style="letter-spacing:-0.36px">, </span><span style="letter-spacing:0.28px">покупатель</span><span style="letter-spacing:-0.36px"> </span><span style="letter-spacing:0.28px">Александр</span><span style="letter-spacing:-0.36px"> </span><span style="letter-spacing:0.28px">Петрович</span></div>
<div class="t" style="right:153.20000000000005px;top:268px;font-size:14px;line-height:14px;font-weight:400;color:#333;text-align:right;"><span style="letter-spacing:-1.16px">12</span><span style="letter-spacing:-0.36px"> </span><span style="letter-spacing:-1.16px">600</span><span style="letter-spacing:-0.36px">,</span><span style="letter-spacing:-1.16px">00</span></div>
<div class="t" style="right:59.700000000000045px;top:268px;font-size:14px;line-height:14px;font-weight:400;color:#333;text-align:right;"><span style="letter-spacing:-1.16px">1</span></div>
<div style="position:absolute;left:585px;top:300px;width:791px;height:1px;background:#abcabe"></div>
<div style="position:absolute;left:1158px;top:284px;width:1px;height:17px;background:#abcabe"></div>
<div style="position:absolute;left:1281px;top:284px;width:1px;height:17px;background:#abcabe"></div>
<div style="position:absolute;left:1375px;top:284px;width:1px;height:17px;background:#abcabe"></div>
<div class="t" style="left:601.5px;top:285px;font-size:14px;line-height:14px;font-weight:400;color:#333;"><span style="letter-spacing:0.28px">Путевка</span><span style="letter-spacing:-0.36px"> №</span><span style="letter-spacing:0.28px">АЛ</span><span style="letter-spacing:-0.36px">-</span><span style="letter-spacing:-1.16px">0658749</span><span style="letter-spacing:-0.36px"> </span><span style="letter-spacing:0.28px">от</span><span style="letter-spacing:-0.36px"> </span><span style="letter-spacing:-1.16px">16</span><span style="letter-spacing:-0.36px">.</span><span style="letter-spacing:-1.16px">10</span><span style="letter-spacing:-0.36px">.</span><span style="letter-spacing:-1.16px">2017</span><span style="letter-spacing:-0.36px">, </span><span style="letter-spacing:0.28px">покупатель</span><span style="letter-spacing:-0.36px"> </span><span style="letter-spacing:0.28px">Алексей</span><span style="letter-spacing:-0.36px"> </span><span style="letter-spacing:0.28px">Михайлов</span><span style="letter-spacing:-0.36px"> </span><span style="letter-spacing:0.28px">Первый</span></div>
<div class="t" style="right:153.20000000000005px;top:285px;font-size:14px;line-height:14px;font-weight:400;color:#333;text-align:right;"><span style="letter-spacing:-1.16px">9</span><span style="letter-spacing:-0.36px"> </span><span style="letter-spacing:-1.16px">611</span><span style="letter-spacing:-0.36px">,</span><span style="letter-spacing:-1.16px">00</span></div>
<div class="t" style="right:59.700000000000045px;top:285px;font-size:14px;line-height:14px;font-weight:400;color:#333;text-align:right;"><span style="letter-spacing:-1.16px">1</span></div>
<div style="position:absolute;left:585px;top:317px;width:791px;height:1px;background:#abcabe"></div>
<div style="position:absolute;left:1158px;top:301px;width:1px;height:17px;background:#abcabe"></div>
<div style="position:absolute;left:1281px;top:301px;width:1px;height:17px;background:#abcabe"></div>
<div style="position:absolute;left:1375px;top:301px;width:1px;height:17px;background:#abcabe"></div>
<div class="t" style="left:601.5px;top:302px;font-size:14px;line-height:14px;font-weight:400;color:#333;"><span style="letter-spacing:0.28px">Путевка</span><span style="letter-spacing:-0.36px"> №</span><span style="letter-spacing:0.28px">АЛ</span><span style="letter-spacing:-0.36px">-</span><span style="letter-spacing:-1.16px">0658750</span><span style="letter-spacing:-0.36px"> </span><span style="letter-spacing:0.28px">от</span><span style="letter-spacing:-0.36px"> </span><span style="letter-spacing:-1.16px">16</span><span style="letter-spacing:-0.36px">.</span><span style="letter-spacing:-1.16px">10</span><span style="letter-spacing:-0.36px">.</span><span style="letter-spacing:-1.16px">2017</span><span style="letter-spacing:-0.36px">, </span><span style="letter-spacing:0.28px">покупатель</span><span style="letter-spacing:-0.36px"> </span><span style="letter-spacing:0.28px">Рахимов</span><span style="letter-spacing:-0.36px"> </span><span style="letter-spacing:0.28px">Иван</span><span style="letter-spacing:-0.36px"> </span><span style="letter-spacing:0.28px">Иванович</span></div>
<div class="t" style="right:153.20000000000005px;top:302px;font-size:14px;line-height:14px;font-weight:400;color:#333;text-align:right;"><span style="letter-spacing:-1.16px">23</span><span style="letter-spacing:-0.36px"> </span><span style="letter-spacing:-1.16px">100</span><span style="letter-spacing:-0.36px">,</span><span style="letter-spacing:-1.16px">00</span></div>
<div class="t" style="right:59.700000000000045px;top:302px;font-size:14px;line-height:14px;font-weight:400;color:#333;text-align:right;"><span style="letter-spacing:-1.16px">1</span></div>
<div style="position:absolute;left:585px;top:334px;width:791px;height:1px;background:#abcabe"></div>
<div style="position:absolute;left:1158px;top:318px;width:1px;height:17px;background:#abcabe"></div>
<div style="position:absolute;left:1281px;top:318px;width:1px;height:17px;background:#abcabe"></div>
<div style="position:absolute;left:1375px;top:318px;width:1px;height:17px;background:#abcabe"></div>
<div class="t" style="left:601.5px;top:319px;font-size:14px;line-height:14px;font-weight:400;color:#333;"><span style="letter-spacing:0.28px">Путевка</span><span style="letter-spacing:-0.36px"> №</span><span style="letter-spacing:0.28px">АЛ</span><span style="letter-spacing:-0.36px">-</span><span style="letter-spacing:-1.16px">0658752</span><span style="letter-spacing:-0.36px"> </span><span style="letter-spacing:0.28px">от</span><span style="letter-spacing:-0.36px"> </span><span style="letter-spacing:-1.16px">17</span><span style="letter-spacing:-0.36px">.</span><span style="letter-spacing:-1.16px">10</span><span style="letter-spacing:-0.36px">.</span><span style="letter-spacing:-1.16px">2017</span><span style="letter-spacing:-0.36px">, </span><span style="letter-spacing:0.28px">покупатель</span><span style="letter-spacing:-0.36px"> </span><span style="letter-spacing:0.28px">Лисичкин</span><span style="letter-spacing:-0.36px"> </span><span style="letter-spacing:0.28px">Петр</span></div>
<div class="t" style="right:153.20000000000005px;top:319px;font-size:14px;line-height:14px;font-weight:400;color:#333;text-align:right;"><span style="letter-spacing:-1.16px">24</span><span style="letter-spacing:-0.36px"> </span><span style="letter-spacing:-1.16px">700</span><span style="letter-spacing:-0.36px">,</span><span style="letter-spacing:-1.16px">00</span></div>
<div class="t" style="right:59.700000000000045px;top:319px;font-size:14px;line-height:14px;font-weight:400;color:#333;text-align:right;"><span style="letter-spacing:-1.16px">1</span></div>
<div style="position:absolute;left:585px;top:351px;width:791px;height:1px;background:#abcabe"></div>
<div style="position:absolute;left:1158px;top:335px;width:1px;height:17px;background:#abcabe"></div>
<div style="position:absolute;left:1281px;top:335px;width:1px;height:17px;background:#abcabe"></div>
<div style="position:absolute;left:1375px;top:335px;width:1px;height:17px;background:#abcabe"></div>
<div class="t" style="left:601.5px;top:336px;font-size:14px;line-height:14px;font-weight:400;color:#333;"><span style="letter-spacing:0.28px">Путевка</span><span style="letter-spacing:-0.36px"> №</span><span style="letter-spacing:0.28px">АЛ</span><span style="letter-spacing:-0.36px">-</span><span style="letter-spacing:-1.16px">0658753</span><span style="letter-spacing:-0.36px"> </span><span style="letter-spacing:0.28px">от</span><span style="letter-spacing:-0.36px"> </span><span style="letter-spacing:-1.16px">18</span><span style="letter-spacing:-0.36px">.</span><span style="letter-spacing:-1.16px">10</span><span style="letter-spacing:-0.36px">.</span><span style="letter-spacing:-1.16px">2017</span><span style="letter-spacing:-0.36px">, </span><span style="letter-spacing:0.28px">покупатель</span><span style="letter-spacing:-0.36px"> </span><span style="letter-spacing:0.28px">Невзоров</span><span style="letter-spacing:-0.36px"> </span><span style="letter-spacing:0.28px">Борис</span><span style="letter-spacing:-0.36px"> </span><span style="letter-spacing:0.28px">Юрьевич</span></div>
<div class="t" style="right:153.20000000000005px;top:336px;font-size:14px;line-height:14px;font-weight:400;color:#333;text-align:right;"><span style="letter-spacing:-1.16px">6</span><span style="letter-spacing:-0.36px"> </span><span style="letter-spacing:-1.16px">600</span><span style="letter-spacing:-0.36px">,</span><span style="letter-spacing:-1.16px">00</span></div>
<div class="t" style="right:59.700000000000045px;top:336px;font-size:14px;line-height:14px;font-weight:400;color:#333;text-align:right;"><span style="letter-spacing:-1.16px">1</span></div>
<div style="position:absolute;left:585px;top:368px;width:791px;height:1px;background:#abcabe"></div>
<div style="position:absolute;left:1158px;top:352px;width:1px;height:17px;background:#abcabe"></div>
<div style="position:absolute;left:1281px;top:352px;width:1px;height:17px;background:#abcabe"></div>
<div style="position:absolute;left:1375px;top:352px;width:1px;height:17px;background:#abcabe"></div>
<div class="t" style="left:601.5px;top:353px;font-size:14px;line-height:14px;font-weight:400;color:#333;"><span style="letter-spacing:0.28px">Путевка</span><span style="letter-spacing:-0.36px"> №</span><span style="letter-spacing:0.28px">АЛ</span><span style="letter-spacing:-0.36px">-</span><span style="letter-spacing:-1.16px">0658754</span><span style="letter-spacing:-0.36px"> </span><span style="letter-spacing:0.28px">от</span><span style="letter-spacing:-0.36px"> </span><span style="letter-spacing:-1.16px">18</span><span style="letter-spacing:-0.36px">.</span><span style="letter-spacing:-1.16px">10</span><span style="letter-spacing:-0.36px">.</span><span style="letter-spacing:-1.16px">2017</span><span style="letter-spacing:-0.36px">, </span><span style="letter-spacing:0.28px">покупатель</span><span style="letter-spacing:-0.36px"> </span><span style="letter-spacing:0.28px">Артем</span><span style="letter-spacing:-0.36px"> </span><span style="letter-spacing:0.28px">Александрович</span></div>
<div class="t" style="right:153.20000000000005px;top:353px;font-size:14px;line-height:14px;font-weight:400;color:#333;text-align:right;"><span style="letter-spacing:-1.16px">6</span><span style="letter-spacing:-0.36px"> </span><span style="letter-spacing:-1.16px">022</span><span style="letter-spacing:-0.36px">,</span><span style="letter-spacing:-1.16px">00</span></div>
<div class="t" style="right:59.700000000000045px;top:353px;font-size:14px;line-height:14px;font-weight:400;color:#333;text-align:right;"><span style="letter-spacing:-1.16px">1</span></div>
<div style="position:absolute;left:585px;top:385px;width:791px;height:1px;background:#abcabe"></div>
<div style="position:absolute;left:1158px;top:369px;width:1px;height:17px;background:#abcabe"></div>
<div style="position:absolute;left:1281px;top:369px;width:1px;height:17px;background:#abcabe"></div>
<div style="position:absolute;left:1375px;top:369px;width:1px;height:17px;background:#abcabe"></div>
<div class="t" style="left:601.5px;top:370px;font-size:14px;line-height:14px;font-weight:400;color:#333;"><span style="letter-spacing:0.28px">Путевка</span><span style="letter-spacing:-0.36px"> №</span><span style="letter-spacing:0.28px">АЛ</span><span style="letter-spacing:-0.36px">-</span><span style="letter-spacing:-1.16px">0000006</span><span style="letter-spacing:-0.36px"> </span><span style="letter-spacing:0.28px">от</span><span style="letter-spacing:-0.36px"> </span><span style="letter-spacing:-1.16px">19</span><span style="letter-spacing:-0.36px">.</span><span style="letter-spacing:-1.16px">10</span><span style="letter-spacing:-0.36px">.</span><span style="letter-spacing:-1.16px">2017</span><span style="letter-spacing:-0.36px">, </span><span style="letter-spacing:0.28px">покупатель</span><span style="letter-spacing:-0.36px"> </span><span style="letter-spacing:0.28px">Аида</span><span style="letter-spacing:-0.36px"> </span><span style="letter-spacing:0.28px">Фаритовна</span></div>
<div class="t" style="right:153.20000000000005px;top:370px;font-size:14px;line-height:14px;font-weight:400;color:#333;text-align:right;"><span style="letter-spacing:-1.16px">31</span><span style="letter-spacing:-0.36px"> </span><span style="letter-spacing:-1.16px">500</span><span style="letter-spacing:-0.36px">,</span><span style="letter-spacing:-1.16px">00</span></div>
<div class="t" style="right:59.700000000000045px;top:370px;font-size:14px;line-height:14px;font-weight:400;color:#333;text-align:right;"><span style="letter-spacing:-1.16px">1</span></div>
<div style="position:absolute;left:585px;top:402px;width:791px;height:1px;background:#abcabe"></div>
<div style="position:absolute;left:1158px;top:386px;width:1px;height:17px;background:#abcabe"></div>
<div style="position:absolute;left:1281px;top:386px;width:1px;height:17px;background:#abcabe"></div>
<div style="position:absolute;left:1375px;top:386px;width:1px;height:17px;background:#abcabe"></div>
<div class="t" style="left:601.5px;top:387px;font-size:14px;line-height:14px;font-weight:400;color:#333;"><span style="letter-spacing:0.28px">Путевка</span><span style="letter-spacing:-0.36px"> №</span><span style="letter-spacing:0.28px">АЛ</span><span style="letter-spacing:-0.36px">-</span><span style="letter-spacing:-1.16px">654987</span><span style="letter-spacing:-0.36px"> </span><span style="letter-spacing:0.28px">от</span><span style="letter-spacing:-0.36px"> </span><span style="letter-spacing:-1.16px">19</span><span style="letter-spacing:-0.36px">.</span><span style="letter-spacing:-1.16px">10</span><span style="letter-spacing:-0.36px">.</span><span style="letter-spacing:-1.16px">2017</span><span style="letter-spacing:-0.36px">, </span><span style="letter-spacing:0.28px">покупатель</span><span style="letter-spacing:-0.36px"> </span><span style="letter-spacing:0.28px">Георгий</span><span style="letter-spacing:-0.36px"> </span><span style="letter-spacing:0.28px">Викторович</span></div>
<div class="t" style="right:153.20000000000005px;top:387px;font-size:14px;line-height:14px;font-weight:400;color:#333;text-align:right;"><span style="letter-spacing:-1.16px">46</span><span style="letter-spacing:-0.36px"> </span><span style="letter-spacing:-1.16px">200</span><span style="letter-spacing:-0.36px">,</span><span style="letter-spacing:-1.16px">00</span></div>
<div class="t" style="right:59.700000000000045px;top:387px;font-size:14px;line-height:14px;font-weight:400;color:#333;text-align:right;"><span style="letter-spacing:-1.16px">1</span></div>
<div style="position:absolute;left:585px;top:419px;width:791px;height:1px;background:#abcabe"></div>
<div style="position:absolute;left:1158px;top:403px;width:1px;height:17px;background:#abcabe"></div>
<div style="position:absolute;left:1281px;top:403px;width:1px;height:17px;background:#abcabe"></div>
<div style="position:absolute;left:1375px;top:403px;width:1px;height:17px;background:#abcabe"></div>
<div class="t" style="left:601.5px;top:404px;font-size:14px;line-height:14px;font-weight:400;color:#333;"><span style="letter-spacing:0.28px">Путевка</span><span style="letter-spacing:-0.36px"> №</span><span style="letter-spacing:0.28px">АЛ</span><span style="letter-spacing:-0.36px">-</span><span style="letter-spacing:-1.16px">0000008</span><span style="letter-spacing:-0.36px"> </span><span style="letter-spacing:0.28px">от</span><span style="letter-spacing:-0.36px"> </span><span style="letter-spacing:-1.16px">19</span><span style="letter-spacing:-0.36px">.</span><span style="letter-spacing:-1.16px">10</span><span style="letter-spacing:-0.36px">.</span><span style="letter-spacing:-1.16px">2017</span><span style="letter-spacing:-0.36px">, &lt;</span><span style="letter-spacing:0.28px">покупатель</span><span style="letter-spacing:-0.36px"> </span><span style="letter-spacing:0.28px">неизвестен</span><span style="letter-spacing:-0.36px">&gt;</span></div>
<div class="t" style="right:153.20000000000005px;top:404px;font-size:14px;line-height:14px;font-weight:400;color:#333;text-align:right;"><span style="letter-spacing:-1.16px">94</span><span style="letter-spacing:-0.36px"> </span><span style="letter-spacing:-1.16px">900</span><span style="letter-spacing:-0.36px">,</span><span style="letter-spacing:-1.16px">00</span></div>
<div class="t" style="right:59.700000000000045px;top:404px;font-size:14px;line-height:14px;font-weight:400;color:#333;text-align:right;"><span style="letter-spacing:-1.16px">1</span></div>
<div style="position:absolute;left:585px;top:436px;width:791px;height:1px;background:#abcabe"></div>
<div style="position:absolute;left:1158px;top:420px;width:1px;height:17px;background:#abcabe"></div>
<div style="position:absolute;left:1281px;top:420px;width:1px;height:17px;background:#abcabe"></div>
<div style="position:absolute;left:1375px;top:420px;width:1px;height:17px;background:#abcabe"></div>
<div class="t" style="left:601.5px;top:421px;font-size:14px;line-height:14px;font-weight:400;color:#333;"><span style="letter-spacing:0.28px">Путевка</span><span style="letter-spacing:-0.36px"> №</span><span style="letter-spacing:0.28px">АЛ</span><span style="letter-spacing:-0.36px">-</span><span style="letter-spacing:-1.16px">0000009</span><span style="letter-spacing:-0.36px"> </span><span style="letter-spacing:0.28px">от</span><span style="letter-spacing:-0.36px"> </span><span style="letter-spacing:-1.16px">19</span><span style="letter-spacing:-0.36px">.</span><span style="letter-spacing:-1.16px">10</span><span style="letter-spacing:-0.36px">.</span><span style="letter-spacing:-1.16px">2017</span><span style="letter-spacing:-0.36px">, &lt;</span><span style="letter-spacing:0.28px">покупатель</span><span style="letter-spacing:-0.36px"> </span><span style="letter-spacing:0.28px">неизвестен</span><span style="letter-spacing:-0.36px">&gt;</span></div>
<div class="t" style="right:153.20000000000005px;top:421px;font-size:14px;line-height:14px;font-weight:400;color:#333;text-align:right;"><span style="letter-spacing:-1.16px">18</span><span style="letter-spacing:-0.36px"> </span><span style="letter-spacing:-1.16px">200</span><span style="letter-spacing:-0.36px">,</span><span style="letter-spacing:-1.16px">00</span></div>
<div class="t" style="right:59.700000000000045px;top:421px;font-size:14px;line-height:14px;font-weight:400;color:#333;text-align:right;"><span style="letter-spacing:-1.16px">1</span></div>
<div style="position:absolute;left:585px;top:453px;width:791px;height:1px;background:#abcabe"></div>
<div style="position:absolute;left:1158px;top:437px;width:1px;height:17px;background:#abcabe"></div>
<div style="position:absolute;left:1281px;top:437px;width:1px;height:17px;background:#abcabe"></div>
<div style="position:absolute;left:1375px;top:437px;width:1px;height:17px;background:#abcabe"></div>
<div class="t" style="left:601.5px;top:438px;font-size:14px;line-height:14px;font-weight:400;color:#333;"><span style="letter-spacing:0.28px">Путевка</span><span style="letter-spacing:-0.36px"> №</span><span style="letter-spacing:0.28px">АЛ</span><span style="letter-spacing:-0.36px">-</span><span style="letter-spacing:-1.16px">0000010</span><span style="letter-spacing:-0.36px"> </span><span style="letter-spacing:0.28px">от</span><span style="letter-spacing:-0.36px"> </span><span style="letter-spacing:-1.16px">20</span><span style="letter-spacing:-0.36px">.</span><span style="letter-spacing:-1.16px">10</span><span style="letter-spacing:-0.36px">.</span><span style="letter-spacing:-1.16px">2017</span><span style="letter-spacing:-0.36px">, </span><span style="letter-spacing:0.28px">покупатель</span><span style="letter-spacing:-0.36px"> </span><span style="letter-spacing:0.28px">ЗАО</span><span style="letter-spacing:-0.36px"> &quot;</span><span style="letter-spacing:0.28px">Туры</span><span style="letter-spacing:-0.36px"> </span><span style="letter-spacing:0.28px">России</span><span style="letter-spacing:-0.36px">&quot;</span></div>
<div class="t" style="right:153.20000000000005px;top:438px;font-size:14px;line-height:14px;font-weight:400;color:#333;text-align:right;"><span style="letter-spacing:-1.16px">36</span><span style="letter-spacing:-0.36px"> </span><span style="letter-spacing:-1.16px">300</span><span style="letter-spacing:-0.36px">,</span><span style="letter-spacing:-1.16px">00</span></div>
<div class="t" style="right:59.700000000000045px;top:438px;font-size:14px;line-height:14px;font-weight:400;color:#333;text-align:right;"><span style="letter-spacing:-1.16px">1</span></div>
<div style="position:absolute;left:585px;top:470px;width:791px;height:1px;background:#abcabe"></div>
<div style="position:absolute;left:1158px;top:454px;width:1px;height:17px;background:#abcabe"></div>
<div style="position:absolute;left:1281px;top:454px;width:1px;height:17px;background:#abcabe"></div>
<div style="position:absolute;left:1375px;top:454px;width:1px;height:17px;background:#abcabe"></div>
<div class="t" style="left:601.5px;top:455px;font-size:14px;line-height:14px;font-weight:400;color:#333;"><span style="letter-spacing:0.28px">Путевка</span><span style="letter-spacing:-0.36px"> №</span><span style="letter-spacing:0.28px">АЛ</span><span style="letter-spacing:-0.36px">-</span><span style="letter-spacing:-1.16px">0000011</span><span style="letter-spacing:-0.36px"> </span><span style="letter-spacing:0.28px">от</span><span style="letter-spacing:-0.36px"> </span><span style="letter-spacing:-1.16px">20</span><span style="letter-spacing:-0.36px">.</span><span style="letter-spacing:-1.16px">10</span><span style="letter-spacing:-0.36px">.</span><span style="letter-spacing:-1.16px">2017</span><span style="letter-spacing:-0.36px">, </span><span style="letter-spacing:0.28px">покупатель</span><span style="letter-spacing:-0.36px"> </span><span style="letter-spacing:0.28px">Невзоров</span><span style="letter-spacing:-0.36px"> </span><span style="letter-spacing:0.28px">Борис</span><span style="letter-spacing:-0.36px"> </span><span style="letter-spacing:0.28px">Юрьевич</span></div>
<div class="t" style="right:153.20000000000005px;top:455px;font-size:14px;line-height:14px;font-weight:400;color:#333;text-align:right;"><span style="letter-spacing:-1.16px">3</span><span style="letter-spacing:-0.36px"> </span><span style="letter-spacing:-1.16px">300</span><span style="letter-spacing:-0.36px">,</span><span style="letter-spacing:-1.16px">00</span></div>
<div class="t" style="right:59.700000000000045px;top:455px;font-size:14px;line-height:14px;font-weight:400;color:#333;text-align:right;"><span style="letter-spacing:-1.16px">1</span></div>
<div style="position:absolute;left:585px;top:487px;width:791px;height:1px;background:#abcabe"></div>
<div style="position:absolute;left:1158px;top:471px;width:1px;height:17px;background:#abcabe"></div>
<div style="position:absolute;left:1281px;top:471px;width:1px;height:17px;background:#abcabe"></div>
<div style="position:absolute;left:1375px;top:471px;width:1px;height:17px;background:#abcabe"></div>
<div class="t" style="left:601.5px;top:472px;font-size:14px;line-height:14px;font-weight:400;color:#333;"><span style="letter-spacing:0.28px">Путевка</span><span style="letter-spacing:-0.36px"> №</span><span style="letter-spacing:0.28px">АЛ</span><span style="letter-spacing:-0.36px">-</span><span style="letter-spacing:-1.16px">0000012</span><span style="letter-spacing:-0.36px"> </span><span style="letter-spacing:0.28px">от</span><span style="letter-spacing:-0.36px"> </span><span style="letter-spacing:-1.16px">20</span><span style="letter-spacing:-0.36px">.</span><span style="letter-spacing:-1.16px">10</span><span style="letter-spacing:-0.36px">.</span><span style="letter-spacing:-1.16px">2017</span><span style="letter-spacing:-0.36px">, </span><span style="letter-spacing:0.28px">покупатель</span><span style="letter-spacing:-0.36px"> </span><span style="letter-spacing:0.28px">ЗАО</span><span style="letter-spacing:-0.36px"> &quot;</span><span style="letter-spacing:0.28px">Туры</span><span style="letter-spacing:-0.36px"> </span><span style="letter-spacing:0.28px">России</span><span style="letter-spacing:-0.36px">&quot;</span></div>
<div class="t" style="right:153.20000000000005px;top:472px;font-size:14px;line-height:14px;font-weight:400;color:#333;text-align:right;"><span style="letter-spacing:-1.16px">1</span><span style="letter-spacing:-0.36px"> </span><span style="letter-spacing:-1.16px">234</span><span style="letter-spacing:-0.36px"> </span><span style="letter-spacing:-1.16px">200</span><span style="letter-spacing:-0.36px">,</span><span style="letter-spacing:-1.16px">00</span></div>
<div class="t" style="right:59.700000000000045px;top:472px;font-size:14px;line-height:14px;font-weight:400;color:#333;text-align:right;"><span style="letter-spacing:-1.16px">1</span></div>
<div style="position:absolute;left:585px;top:504px;width:791px;height:1px;background:#abcabe"></div>
<div style="position:absolute;left:1158px;top:488px;width:1px;height:17px;background:#abcabe"></div>
<div style="position:absolute;left:1281px;top:488px;width:1px;height:17px;background:#abcabe"></div>
<div style="position:absolute;left:1375px;top:488px;width:1px;height:17px;background:#abcabe"></div>
<div class="t" style="left:601.5px;top:489px;font-size:14px;line-height:14px;font-weight:400;color:#333;"><span style="letter-spacing:0.28px">Путевка</span><span style="letter-spacing:-0.36px"> №</span><span style="letter-spacing:0.28px">АЛ</span><span style="letter-spacing:-0.36px">-</span><span style="letter-spacing:-1.16px">0000013</span><span style="letter-spacing:-0.36px"> </span><span style="letter-spacing:0.28px">от</span><span style="letter-spacing:-0.36px"> </span><span style="letter-spacing:-1.16px">25</span><span style="letter-spacing:-0.36px">.</span><span style="letter-spacing:-1.16px">10</span><span style="letter-spacing:-0.36px">.</span><span style="letter-spacing:-1.16px">2017</span><span style="letter-spacing:-0.36px">, </span><span style="letter-spacing:0.28px">покупатель</span><span style="letter-spacing:-0.36px"> </span><span style="letter-spacing:0.28px">Евгений</span><span style="letter-spacing:-0.36px"> </span><span style="letter-spacing:0.28px">Анатольевич</span></div>
<div class="t" style="right:153.20000000000005px;top:489px;font-size:14px;line-height:14px;font-weight:400;color:#333;text-align:right;"><span style="letter-spacing:-1.16px">33</span><span style="letter-spacing:-0.36px"> </span><span style="letter-spacing:-1.16px">000</span><span style="letter-spacing:-0.36px">,</span><span style="letter-spacing:-1.16px">00</span></div>
<div class="t" style="right:59.700000000000045px;top:489px;font-size:14px;line-height:14px;font-weight:400;color:#333;text-align:right;"><span style="letter-spacing:-1.16px">1</span></div>
<div style="position:absolute;left:585px;top:521px;width:791px;height:1px;background:#abcabe"></div>
<div style="position:absolute;left:1158px;top:505px;width:1px;height:17px;background:#abcabe"></div>
<div style="position:absolute;left:1281px;top:505px;width:1px;height:17px;background:#abcabe"></div>
<div style="position:absolute;left:1375px;top:505px;width:1px;height:17px;background:#abcabe"></div>
<div class="t" style="left:601.5px;top:506px;font-size:14px;line-height:14px;font-weight:400;color:#333;"><span style="letter-spacing:0.28px">Путевка</span><span style="letter-spacing:-0.36px"> №</span><span style="letter-spacing:0.28px">АЛ</span><span style="letter-spacing:-0.36px">-</span><span style="letter-spacing:-1.16px">0000014</span><span style="letter-spacing:-0.36px"> </span><span style="letter-spacing:0.28px">от</span><span style="letter-spacing:-0.36px"> </span><span style="letter-spacing:-1.16px">25</span><span style="letter-spacing:-0.36px">.</span><span style="letter-spacing:-1.16px">10</span><span style="letter-spacing:-0.36px">.</span><span style="letter-spacing:-1.16px">2017</span><span style="letter-spacing:-0.36px">, </span><span style="letter-spacing:0.28px">покупатель</span><span style="letter-spacing:-0.36px"> </span><span style="letter-spacing:0.28px">Носков</span><span style="letter-spacing:-0.36px"> </span><span style="letter-spacing:0.28px">Дмитрий</span><span style="letter-spacing:-0.36px"> </span><span style="letter-spacing:0.28px">Алексеевич</span></div>
<div class="t" style="right:153.20000000000005px;top:506px;font-size:14px;line-height:14px;font-weight:400;color:#333;text-align:right;"><span style="letter-spacing:-1.16px">49</span><span style="letter-spacing:-0.36px"> </span><span style="letter-spacing:-1.16px">500</span><span style="letter-spacing:-0.36px">,</span><span style="letter-spacing:-1.16px">00</span></div>
<div class="t" style="right:59.700000000000045px;top:506px;font-size:14px;line-height:14px;font-weight:400;color:#333;text-align:right;"><span style="letter-spacing:-1.16px">1</span></div>
<div style="position:absolute;left:585px;top:538px;width:791px;height:1px;background:#abcabe"></div>
<div style="position:absolute;left:1158px;top:522px;width:1px;height:17px;background:#abcabe"></div>
<div style="position:absolute;left:1281px;top:522px;width:1px;height:17px;background:#abcabe"></div>
<div style="position:absolute;left:1375px;top:522px;width:1px;height:17px;background:#abcabe"></div>
<div class="t" style="left:601.5px;top:523px;font-size:14px;line-height:14px;font-weight:400;color:#333;"><span style="letter-spacing:0.28px">Путевка</span><span style="letter-spacing:-0.36px"> №</span><span style="letter-spacing:0.28px">АЛ</span><span style="letter-spacing:-0.36px">-</span><span style="letter-spacing:-1.16px">089876</span><span style="letter-spacing:-0.36px"> </span><span style="letter-spacing:0.28px">от</span><span style="letter-spacing:-0.36px"> </span><span style="letter-spacing:-1.16px">25</span><span style="letter-spacing:-0.36px">.</span><span style="letter-spacing:-1.16px">10</span><span style="letter-spacing:-0.36px">.</span><span style="letter-spacing:-1.16px">2017</span><span style="letter-spacing:-0.36px">, </span><span style="letter-spacing:0.28px">покупатель</span><span style="letter-spacing:-0.36px"> </span><span style="letter-spacing:0.28px">Константин</span><span style="letter-spacing:-0.36px"> </span><span style="letter-spacing:0.28px">Сергеевич</span></div>
<div class="t" style="right:153.20000000000005px;top:523px;font-size:14px;line-height:14px;font-weight:400;color:#333;text-align:right;"><span style="letter-spacing:-1.16px">49</span><span style="letter-spacing:-0.36px"> </span><span style="letter-spacing:-1.16px">500</span><span style="letter-spacing:-0.36px">,</span><span style="letter-spacing:-1.16px">00</span></div>
<div class="t" style="right:59.700000000000045px;top:523px;font-size:14px;line-height:14px;font-weight:400;color:#333;text-align:right;"><span style="letter-spacing:-1.16px">1</span></div>
<div style="position:absolute;left:585px;top:539px;width:791px;height:16px;background:#e3eedb"></div>
<div style="position:absolute;left:585px;top:555px;width:791px;height:1px;background:#abcabe"></div>
<div style="position:absolute;left:1158px;top:539px;width:1px;height:17px;background:#abcabe"></div>
<div style="position:absolute;left:1281px;top:539px;width:1px;height:17px;background:#abcabe"></div>
<div style="position:absolute;left:1375px;top:539px;width:1px;height:17px;background:#abcabe"></div>
<div class="t" style="left:587.4px;top:540px;font-size:14px;line-height:14px;font-weight:400;color:#16362a;"><span style="letter-spacing:0.28px">Санаторно</span><span style="letter-spacing:-0.36px">-</span><span style="letter-spacing:0.28px">курортная</span><span style="letter-spacing:-0.36px"> </span><span style="letter-spacing:0.28px">путевка</span><span style="letter-spacing:-0.36px"> (</span><span style="letter-spacing:0.28px">платная</span><span style="letter-spacing:-0.36px">)</span></div>
<div class="t" style="right:153.20000000000005px;top:540px;font-size:14px;line-height:14px;font-weight:400;color:#16362a;text-align:right;"><span style="letter-spacing:-1.16px">35</span><span style="letter-spacing:-0.36px"> </span><span style="letter-spacing:-1.16px">000</span><span style="letter-spacing:-0.36px">,</span><span style="letter-spacing:-1.16px">00</span></div>
<div class="t" style="right:59.700000000000045px;top:540px;font-size:14px;line-height:14px;font-weight:400;color:#16362a;text-align:right;"><span style="letter-spacing:-1.16px">1</span></div>
<div style="position:absolute;left:585px;top:572px;width:791px;height:1px;background:#abcabe"></div>
<div style="position:absolute;left:1158px;top:556px;width:1px;height:17px;background:#abcabe"></div>
<div style="position:absolute;left:1281px;top:556px;width:1px;height:17px;background:#abcabe"></div>
<div style="position:absolute;left:1375px;top:556px;width:1px;height:17px;background:#abcabe"></div>
<div class="t" style="left:601.5px;top:557px;font-size:14px;line-height:14px;font-weight:400;color:#333;"><span style="letter-spacing:0.28px">Путевка</span><span style="letter-spacing:-0.36px"> №</span><span style="letter-spacing:0.28px">АГ</span><span style="letter-spacing:-0.36px">-</span><span style="letter-spacing:-1.16px">0986582</span><span style="letter-spacing:-0.36px"> </span><span style="letter-spacing:0.28px">от</span><span style="letter-spacing:-0.36px"> </span><span style="letter-spacing:-1.16px">03</span><span style="letter-spacing:-0.36px">.</span><span style="letter-spacing:-1.16px">10</span><span style="letter-spacing:-0.36px">.</span><span style="letter-spacing:-1.16px">2017</span><span style="letter-spacing:-0.36px">, </span><span style="letter-spacing:0.28px">покупатель</span><span style="letter-spacing:-0.36px"> </span><span style="letter-spacing:0.28px">Анис</span><span style="letter-spacing:-0.36px"> </span><span style="letter-spacing:0.28px">Мударисович</span></div>
<div class="t" style="right:153.20000000000005px;top:557px;font-size:14px;line-height:14px;font-weight:400;color:#333;text-align:right;"><span style="letter-spacing:-1.16px">35</span><span style="letter-spacing:-0.36px"> </span><span style="letter-spacing:-1.16px">000</span><span style="letter-spacing:-0.36px">,</span><span style="letter-spacing:-1.16px">00</span></div>
<div class="t" style="right:59.700000000000045px;top:557px;font-size:14px;line-height:14px;font-weight:400;color:#333;text-align:right;"><span style="letter-spacing:-1.16px">1</span></div>
<div style="position:absolute;left:585px;top:573px;width:791px;height:16px;background:#d6e4cc"></div>
<div style="position:absolute;left:1158px;top:573px;width:1px;height:17px;background:#a3a8a3"></div>
<div style="position:absolute;left:1281px;top:573px;width:1px;height:17px;background:#a3a8a3"></div>
<div style="position:absolute;left:1375px;top:573px;width:1px;height:17px;background:#a3a8a3"></div>
<div class="t" style="left:587.6px;top:574px;font-size:14px;line-height:14px;font-weight:700;color:#16362a;letter-spacing:-0.8px">Итого</div>
<div class="t" style="right:153.20000000000005px;top:574px;font-size:14px;line-height:14px;font-weight:700;color:#16362a;text-align:right;letter-spacing:-0.65px">1 727 543,00</div>
<div class="t" style="right:59.700000000000045px;top:574px;font-size:14px;line-height:14px;font-weight:700;color:#16362a;text-align:right;letter-spacing:-0.65px">19</div>
<div style="position:absolute;left:584px;top:572px;width:792px;height:1px;background:#a3a8a3"></div>
<div style="position:absolute;left:584px;top:589px;width:792px;height:1px;background:#999"></div>
<div style="position:absolute;left:559px;top:202px;width:11px;height:11px;box-sizing:border-box;border:1px solid #ababab;border-radius:1.5px;background:#fff"></div>
<div style="position:absolute;left:561px;top:207px;width:7px;height:1px;background:#333"></div>
<div style="position:absolute;left:564px;top:213px;width:1px;height:19px;background:#9a9a9a"></div>
<div style="position:absolute;left:564px;top:232px;width:20px;height:1px;background:#9a9a9a"></div>
<div style="position:absolute;left:559px;top:236px;width:11px;height:11px;box-sizing:border-box;border:1px solid #ababab;border-radius:1.5px;background:#fff"></div>
<div style="position:absolute;left:561px;top:241px;width:7px;height:1px;background:#333"></div>
<div style="position:absolute;left:564px;top:247px;width:1px;height:291px;background:#9a9a9a"></div>
<div style="position:absolute;left:564px;top:538px;width:20px;height:1px;background:#9a9a9a"></div>
<div style="position:absolute;left:559px;top:542px;width:11px;height:11px;box-sizing:border-box;border:1px solid #ababab;border-radius:1.5px;background:#fff"></div>
<div style="position:absolute;left:561px;top:547px;width:7px;height:1px;background:#333"></div>
<div style="position:absolute;left:564px;top:553px;width:1px;height:19px;background:#9a9a9a"></div>
<div style="position:absolute;left:564px;top:572px;width:20px;height:1px;background:#9a9a9a"></div>
<svg style="position:absolute;left:1399px;top:121px" width="10" height="8"><path d="M2.2 6.5 L5 3 L7.8 6.5 Z" fill="#c9c9c9"/></svg>
<div style="position:absolute;left:1400px;top:138px;width:8px;height:432px;background:#d4d4d4;border-radius:4px"></div>
<div style="position:absolute;left:1400px;top:138px;width:8px;height:293px;background:#9b9b9b;border-radius:4px"></div>
<svg style="position:absolute;left:1399px;top:578px" width="10" height="8"><path d="M1 1.5 L9 1.5 L5 6.5 Z" fill="#555"/></svg>
<svg style="position:absolute;left:563px;top:595px" width="8" height="10"><path d="M6.5 1 L2 5 L6.5 9 Z" fill="#c9c9c9"/></svg>
<div style="position:absolute;left:579px;top:596px;width:796px;height:8px;background:#d4d4d4;border-radius:4px"></div>
<div style="position:absolute;left:579px;top:596px;width:686px;height:8px;background:#9b9b9b;border-radius:4px"></div>
<svg style="position:absolute;left:1382px;top:595px" width="8" height="10"><path d="M1.5 1 L6 5 L1.5 9 Z" fill="#444"/></svg>
</body></html>
